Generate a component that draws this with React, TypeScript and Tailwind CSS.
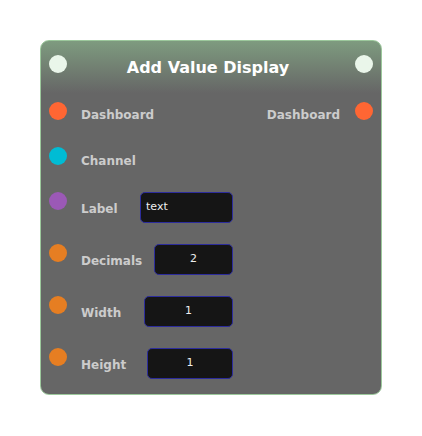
const font = { fontFamily: '"DejaVu Sans", Verdana, sans-serif' };

function Port({ color, className = "" }: { color: string; className?: string }) {
  return <span className={`block h-[18px] w-[18px] shrink-0 rounded-full ${color} ${className}`} />;
}

function InputRow({
  port,
  label,
  value,
  width,
  align = "center",
}: {
  port: string;
  label: string;
  value: string;
  width: string;
  align?: "left" | "center";
}) {
  return (
    <div className="flex h-[31px] items-center">
      <Port color={port} className="self-start" />
      <div className="ml-[14px] flex w-[152px] items-center">
        <span className="pt-[3px] text-[12px] font-bold text-[#cccccc]">{label}</span>
        <div
          className={`ml-auto flex h-[31px] ${width} items-center rounded-[5px] border border-[#2c2c9c] bg-[#151515] text-[11px] text-[#eeeeee] ${
            align === "left" ? "justify-start pl-[5px]" : "justify-center"
          }`}
        >
          {value}
        </div>
      </div>
    </div>
  );
}

export default function App() {
  return (
    <div className="min-h-screen bg-white pl-[40px] pt-[40px]" style={font}>
      <div className="flex h-[355px] w-[342px] flex-col rounded-[9px] border border-[#9cc89c] bg-[linear-gradient(180deg,#7e9b7f_0px,#666666_52px)] px-[8px] pt-[14px]">
        <div className="flex h-[18px] items-start">
          <Port color="bg-[#eaf6ea]" />
          <div className="mt-[3px] flex-1 pr-[6px] text-center text-[16px] font-bold leading-[20px] text-white">
            Add Value Display
          </div>
          <Port color="bg-[#eaf6ea]" />
        </div>

        <div className="mt-[28px] flex h-[26px] items-center">
          <Port color="bg-[#ff6633]" className="mt-[1px] self-start" />
          <span className="ml-[14px] pt-[2px] text-[12px] font-bold text-[#cccccc]">Dashboard</span>
          <span className="ml-auto mr-[15px] pt-[2px] text-[12px] font-bold text-[#cccccc]">Dashboard</span>
          <Port color="bg-[#ff6633]" className="mt-[1px] self-start" />
        </div>

        <div className="mt-[19px] flex h-[26px] items-center">
          <Port color="bg-[#00bcd4]" className="mt-[1px] self-start" />
          <span className="ml-[14px] pt-[3px] text-[12px] font-bold text-[#cccccc]">Channel</span>
        </div>

        <div className="mt-[20px] flex flex-col gap-[21px]">
          <InputRow port="bg-[#9b59b6]" label="Label" value="text" width="w-[93px]" align="left" />
          <InputRow port="bg-[#e67e22]" label="Decimals" value="2" width="w-[79px]" />
          <InputRow port="bg-[#e67e22]" label="Width" value="1" width="w-[89px]" />
          <InputRow port="bg-[#e67e22]" label="Height" value="1" width="w-[86px]" />
        </div>
      </div>
    </div>
  );
}
